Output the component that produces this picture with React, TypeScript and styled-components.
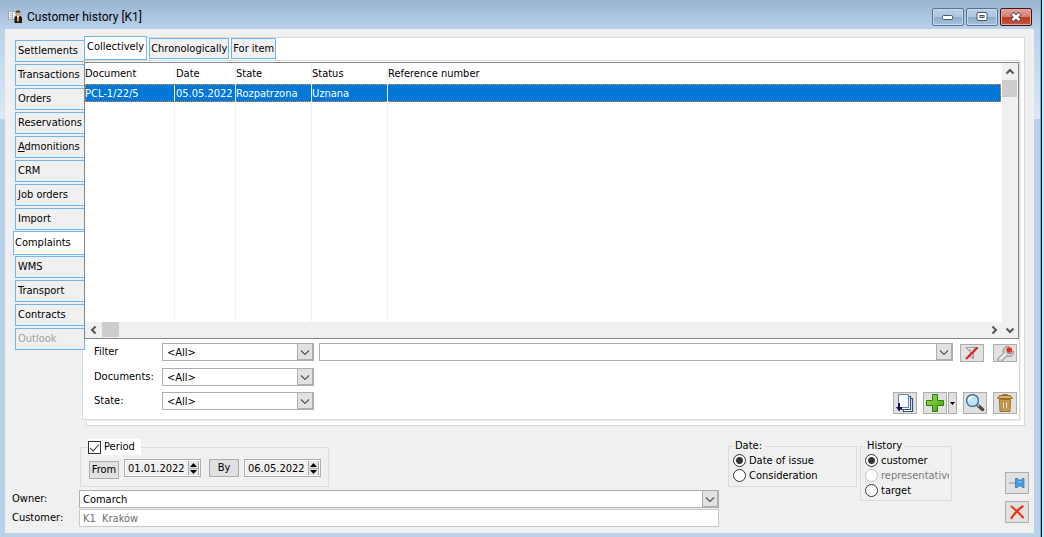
import React, { useState } from 'react';
import styled, { createGlobalStyle, css } from 'styled-components';

const GlobalStyle = createGlobalStyle`
  *, *::before, *::after { box-sizing: border-box; }
  body {
    margin: 0;
    font-family: "DejaVu Sans Condensed", "Noto Sans", sans-serif;
    font-size: 11px;
    line-height: 14px;
    color: #000;
    background: #dedfee;
  }
  button, input, select { font: inherit; color: inherit; margin: 0; border-radius: 0; }
`;

const Window = styled.div`
  display: flex;
  flex-direction: column;
  min-height: 100vh;
  margin-right: 2px;
  padding: 0 7px 4px 5px;
  border-right: 1px solid #000;
  box-shadow: inset -1px 0 0 #35cdf0;
  background:
    linear-gradient(#9ab4d1, #b9d1ea) 0 0 / 100% 29px no-repeat,
    linear-gradient(#b9d1ea, #dce8f5) 0 29px / 100% 90px no-repeat,
    #bad1ea;
`;

const TitleBar = styled.header`
  display: flex;
  align-items: center;
  height: 29px;
  padding: 5px 2px 0 3px;
  gap: 5px;
`;

const Title = styled.h1`
  flex: 1;
  margin: 0;
  font: 12px/18px Roboto, "Open Sans", sans-serif;
`;

const Caption = styled.div`
  display: flex;
  gap: 2px;
`;

const CaptionButton = styled.button<{ $close?: boolean }>`
  display: grid;
  place-items: center;
  width: 32px;
  height: 18px;
  padding: 0;
  border: 1px solid ${p => (p.$close ? '#43141c' : '#56708f')};
  border-radius: 2px;
  box-shadow: inset 0 0 0 1px ${p => (p.$close ? '#e3a59c' : '#c8dbee')};
  background: ${p =>
    p.$close
      ? 'linear-gradient(#e3a196, #d37f73 48%, #b93c27 52%, #c9553c)'
      : 'linear-gradient(#bdd1e7, #adc5df 48%, #8eacca 52%, #a6c1dd)'};
`;

const Content = styled.main`
  flex: 1;
  display: flex;
  flex-direction: column;
  background: #f0f0f0;
`;

const Upper = styled.div`
  flex: 1;
  display: grid;
  grid-template-columns: 81px 1fr;
  padding: 8px 9px 0 0;
`;

const SideTabs = styled.nav`
  position: relative;
  z-index: 1;
  display: flex;
  flex-direction: column;
  align-items: flex-end;
  gap: 2px;
  padding: 3px 1px 0 0;
`;

const tabBase = css`
  padding: 0 2px;
  border: 1px solid #6cb8f5;
  background: #f0f0f0;
  text-align: left;
  white-space: nowrap;
`;

const SideTab = styled.button<{ $active?: boolean }>`
  ${tabBase}
  width: 70px;
  height: 22px;
  &:disabled { color: #a0a0a0; }
  ${p => p.$active && css`
    width: 72px;
    height: 24px;
    margin: -1px 0;
    padding-left: 1px;
    background: #fff;
  `}
`;

const BackPanel = styled.section`
  display: flex;
  flex-direction: column;
  min-width: 0;
  padding: 0 4px 5px 0;
  border: 1px solid #d9d9d9;
  background: #fff;
`;

const TopTabs = styled.div`
  display: flex;
  align-items: flex-end;
  gap: 2px;
  height: 24px;
  margin: -2px 0 0 -3px;
`;

const TopTab = styled.button<{ $active?: boolean }>`
  ${tabBase}
  height: 21px;
  margin-bottom: 1px;
  padding: 1px 1px 0;
  ${p => p.$active && css`
    height: 24px;
    margin: 0;
    padding: 0 2px 2px;
    background: #fff;
  `}
`;

const FrontPanel = styled.div`
  flex: 1;
  display: flex;
  flex-direction: column;
  margin-left: -5px;
  padding: 1px 0 0 1px;
  border: 1px solid #d9d9d9;
  box-shadow: 1px 1px 0 #f0f0f0;
  background: #fff;
`;

const Grid = styled.div`
  position: relative;
  z-index: 2;
  flex: 1;
  display: grid;
  grid-template: 1fr 16px / 1fr 16px;
  border: 1px solid #828790;
  background: #fff;
`;

const TableArea = styled.div`
  display: grid;
  padding-right: 1px;
`;

const Table = styled.table`
  width: 100%;
  height: 100%;
  border-collapse: separate;
  border-spacing: 0;
  table-layout: fixed;
  th, td {
    padding: 0;
    border-right: 1px solid #f0f0f0;
    font-weight: normal;
    text-align: left;
    white-space: nowrap;
  }
  th:last-child, td:last-child { border-right: 0; }
  th { height: 21px; }
  td { padding-top: 1px; }
  th:nth-child(2), td:nth-child(2) { padding-left: 1px; }
`;

const SelectedRow = styled.tr`
  height: 18px;
  background: #0078d7;
  color: #fff;
  outline: 1px dotted #f08a2c;
  outline-offset: -1px;
`;

const ScrollBar = styled.div<{ $vertical?: boolean }>`
  display: flex;
  flex-direction: ${p => (p.$vertical ? 'column' : 'row')};
  justify-content: space-between;
  background: #f0f0f0;
`;

const ScrollStart = styled.div<{ $vertical?: boolean }>`
  display: flex;
  flex-direction: ${p => (p.$vertical ? 'column' : 'row')};
`;

const Thumb = styled.div<{ $vertical?: boolean }>`
  width: ${p => (p.$vertical ? 15 : 17)}px;
  height: ${p => (p.$vertical ? 17 : 15)}px;
  background: #cdcdcd;
`;

const ArrowButton = styled.button`
  display: grid;
  place-items: center;
  width: 17px;
  height: 16px;
  padding: 0;
  border: 0;
  background: transparent;
`;

const NarrowArrow = styled(ArrowButton)`
  width: 16px;
  height: 17px;
`;

const Corner = styled(ArrowButton)`
  width: 16px;
  background: #f0f0f0;
`;

const Filters = styled.form`
  display: flex;
  flex-direction: column;
  gap: 6px;
  padding: 4px 2px 5px 10px;
`;

const FilterRow = styled.div`
  display: flex;
  align-items: flex-start;
`;

const FilterLabel = styled.label`
  width: 68px;
  padding-top: 2px;
`;

const SelectWrap = styled.div<{ $grow?: boolean }>`
  position: relative;
  height: 18px;
  ${p => (p.$grow ? 'flex: 1; min-width: 0;' : 'width: 152px;')}
`;

const Select = styled.select<{ $inset: number }>`
  appearance: none;
  display: block;
  width: 100%;
  height: 18px;
  padding: 1px 18px 0 ${p => p.$inset}px;
  border: 1px solid #adadb3;
  background: #fff;
`;

const Chevron = styled.span`
  position: absolute;
  top: 0;
  right: 0;
  display: grid;
  place-items: center;
  width: 17px;
  height: 18px;
  border: 1px solid #adadb3;
  border-right-width: 2px;
  border-bottom-width: 2px;
  background: #e1e1e1;
  pointer-events: none;
`;

const ExpressionSlot = styled.div`
  flex: 1;
  display: flex;
  min-width: 0;
  padding-left: 5px;
`;

const Actions = styled.div<{ $top?: boolean }>`
  display: flex;
  gap: ${p => (p.$top ? 9 : 6)}px;
  margin: ${p => (p.$top ? '1px 0 0 7px' : '0 0 0 auto')};
`;

const Split = styled.div`
  display: flex;
  gap: 1px;
`;

const IconButton = styled.button<{ $h?: number; $w?: number }>`
  display: grid;
  place-items: center;
  width: ${p => p.$w ?? 24}px;
  height: ${p => p.$h ?? 22}px;
  padding: 0;
  border: 1px solid #adadad;
  background: #e1e1e1;
  overflow: hidden;
`;

const Lower = styled.div`
  display: flex;
  align-items: flex-start;
  padding: 13px 5px 6px 7px;
`;

const Details = styled.div`
  flex: 1;
  min-width: 0;
  display: flex;
  flex-direction: column;
  gap: 1px;
`;

const Group = styled.fieldset`
  min-width: 0;
  margin: 0;
  padding: 0;
  border: 1px solid #dcdcdc;
`;

const PeriodGroup = styled(Group)`
  width: 249px;
  height: 48px;
  margin: 0 0 2px 68px;
`;

const PeriodLegend = styled.legend`
  margin-left: 7px;
  padding: 0 6px 0 0;
  background: #fff;
`;

const CheckLabel = styled.label`
  display: flex;
  align-items: center;
  gap: 3px;
  height: 16px;
`;

const Check = styled.input`
  appearance: none;
  display: grid;
  place-items: center;
  width: 13px;
  height: 13px;
  border: 1px solid #333;
  background: #fff;
  &:checked::after {
    content: "";
    width: 9px;
    height: 5px;
    border: solid #333;
    border-width: 0 0 1px 1px;
    transform: translateY(-1px) rotate(-48deg);
  }
`;

const PeriodFields = styled.div`
  display: flex;
  align-items: flex-start;
  gap: 5px;
  padding: 4px 7px 0 8px;
`;

const TextButton = styled.button<{ $low?: boolean }>`
  width: 30px;
  height: 18px;
  margin: ${p => (p.$low ? '2px 0 0' : '0 0 0 3px')};
  padding: 0;
  border: 1px solid #adadad;
  background: #e1e1e1;
`;

const DateBox = styled.div`
  display: flex;
  width: 77px;
  height: 18px;
  padding: 1px;
  border: 1px solid #adadb3;
  box-shadow: inset 0 0 0 1px #fff;
`;

const DateInput = styled.input`
  flex: 1;
  min-width: 0;
  padding: 1px 0 0 2px;
  border: 0;
  background: transparent;
`;

const Spinner = styled.div`
  display: grid;
  grid-template-rows: 1fr 1fr;
  width: 11px;
  border: solid #adadb3;
  border-width: 0 1px;
`;

const SpinButton = styled.button`
  display: grid;
  place-items: center;
  min-height: 0;
  padding: 0;
  border: 0;
  background: #e6e6e6;
  & + & { border-top: 1px solid #adadb3; }
`;

const FieldRow = styled.div`
  display: flex;
`;

const FieldLabel = styled.label`
  width: 67px;
  padding-top: 2px;
`;

const ReadonlyField = styled.input`
  flex: 1;
  min-width: 0;
  height: 18px;
  padding: 1px 3px 0;
  border: 1px solid #c8c8cc;
  background: #fff;
  &:disabled { color: #6d6d6d; }
`;

const RadioGroup = styled(Group)<{ $w: number; $h: number; $gap: number }>`
  width: ${p => p.$w}px;
  height: ${p => p.$h}px;
  margin-left: ${p => p.$gap}px;
  padding: 0 2px 0 4px;
  > legend { padding: 0 3px 0 2px; }
`;

const RadioLabel = styled.label<{ $off?: boolean }>`
  display: flex;
  align-items: center;
  gap: 3px;
  height: 15px;
  overflow: hidden;
  white-space: nowrap;
  color: ${p => (p.$off ? '#7a7a7a' : 'inherit')};
`;

const Radio = styled.input`
  appearance: none;
  flex: none;
  width: 13px;
  height: 13px;
  border: 1px solid #333;
  border-radius: 50%;
  background: #fff;
  &:checked { background: radial-gradient(circle, #333 0 3px, #fff 4px); }
  &:disabled { border-color: #c4c4c4; }
`;

const WindowActions = styled.div`
  display: flex;
  flex-direction: column;
  gap: 7px;
  margin: 33px 0 0 53px;
`;

const Arrow = ({ d }: { d: 'up' | 'down' | 'left' | 'right' }) => {
  const path = {
    up: 'M1.5 6.5 5 3l3.5 3.5',
    down: 'M1.5 3.5 5 7l3.5-3.5',
    left: 'M6.5 1.5 3 5l3.5 3.5',
    right: 'M3.5 1.5 7 5l-3.5 3.5',
  }[d];
  return (
    <svg width="10" height="10" viewBox="0 0 10 10" fill="none" stroke="#555" strokeWidth="2">
      <path d={path} />
    </svg>
  );
};

const DropArrow = () => (
  <svg width="10" height="8" viewBox="0 0 10 8" fill="none" stroke="#555" strokeWidth="1.2">
    <path d="M1 2.500 5 6.500 9 2.500" />
  </svg>
);

const AppIcon = () => (
  <svg width="14" height="14" viewBox="0 0 14 14">
    <path d="M.5 1.500 4 1l4 1v8l-4-1-3.500.8z" fill="#eef2f5" stroke="#8d9aa6" strokeWidth=".8" />
    <path d="M2 3.500h3M2 5.500h3M2 7.500h3M4.500 1v8" stroke="#a4afb8" strokeWidth=".8" />
    <circle cx="10" cy="3.300" r="2.300" fill="#d9a06c" />
    <path d="M7.600 3a2.400 2.400 0 0 1 4.800 0L11 2.200H9z" fill="#3a2413" />
    <path d="M6.500 13V7.500Q7 5.500 10 5.500t4 2V13z" fill="#15151a" />
    <path d="M8.500 5.600h3L10 10z" fill="#fff" />
    <path d="m10 6 1.300 4-1.300 2.500L8.700 10z" fill="#f39a16" />
  </svg>
);

const FunnelOff = () => (
  <svg width="18" height="16" viewBox="0 0 18 16">
    <path d="M3 2.500h12l-4.500 4.500v6.500l-3-1.500V7z" fill="#bdbdbd" stroke="#9a9a9a" />
    <path d="M5 3.500h5L8.500 6.500v5" stroke="#f2f2f2" fill="none" />
    <path d="M3 14 14.500 2.500" stroke="#dc1f1f" strokeWidth="2.200" />
  </svg>
);

const Wrench = () => (
  <svg width="20" height="17" viewBox="0 0 20 17">
    <path
      d="M3 13.500 8.500 8.200C7 4.500 9.500 1.200 14 1.500L11.500 4.500l1 3.500 3.500.5 2.500-2.500c.5 4-3 6.500-6.500 5l-5 5.200c-2 1.500-5.300-.5-4-2.700z"
      fill="#d0d0d0"
      stroke="#858585"
    />
    <path d="m5 14 6-5.800" stroke="#f7f7f7" strokeWidth="1.200" />
    <circle cx="14.500" cy="5" r="2.700" fill="#e23415" />
  </svg>
);

const Pages = () => (
  <svg width="20" height="20" viewBox="0 0 20 20">
    <path d="M8.500 5.500h9v13h-9z" fill="#fff" stroke="#30557f" strokeWidth="1.200" />
    <path d="M6.500 3.500h9v13h-9z" fill="#fff" stroke="#30557f" strokeWidth="1.200" />
    <path d="M3.500 1.500h10v13h-10z" fill="#f7fbff" stroke="#6384a8" />
    <path d="M4 10v5" stroke="#160b66" strokeWidth="2" />
    <path d="M1 14h6.500L4.200 18.500z" fill="#160b66" />
  </svg>
);

const Plus = () => (
  <svg width="20" height="20" viewBox="0 0 20 20">
    <defs>
      <linearGradient id="plusFill" x2="1" y2="1">
        <stop offset="0" stopColor="#a0e052" />
        <stop offset="1" stopColor="#3c9f10" />
      </linearGradient>
    </defs>
    <path d="M7.500 1.500h5v6h6v5h-6v6h-5v-6h-6v-5h6z" fill="url(#plusFill)" stroke="#2e7d12" />
  </svg>
);

const Magnifier = () => (
  <svg width="20" height="20" viewBox="0 0 20 20">
    <path d="m12 11.500 5.500 5" stroke="#4d4d50" strokeWidth="3.500" strokeLinecap="round" />
    <path d="m11.500 11 2.500 2" stroke="#b8b8b8" strokeWidth="2" />
    <circle cx="7.500" cy="7.500" r="5.900" fill="#bfe2f8" stroke="#356a9c" strokeWidth="1.300" />
    <path d="M4 7.500A3.600 3.600 0 0 1 8.500 4" stroke="#fff" strokeWidth="1.800" fill="none" />
  </svg>
);

const Bin = () => (
  <svg width="18" height="20" viewBox="0 0 18 20">
    <path d="M6.500 2.500v-1h5v1" fill="none" stroke="#9b702e" />
    <path d="M3.500 2.500h11l2 3h-15z" fill="#dcae66" stroke="#9b702e" />
    <path d="M3.500 6.500h11l-.5 12H4z" fill="#cf9a4c" stroke="#9b702e" />
    <path d="M6.500 8.500v7.500h1.800V8.500zm3.300 0v7.500h1.800V8.500z" fill="#f9ecd2" stroke="#9b702e" strokeWidth=".6" />
  </svg>
);

const Pin = () => (
  <svg width="18" height="12" viewBox="0 0 18 12">
    <path d="M1 6h7" stroke="#8f9aa3" />
    <path d="M7.500 1.500h2L10.500 3h3l1-1.500H16v9h-1.500l-1-1.500h-3l-1 1.500h-2z" fill="#4a9ae0" stroke="#2f78be" strokeWidth=".8" />
    <path d="M10 5h3.500" stroke="#a9d5f8" />
  </svg>
);

const Cross = () => (
  <svg width="16" height="16" viewBox="0 0 16 16" fill="none" stroke="#ee3214" strokeLinecap="round">
    <path d="M2.500 2.500Q9 8 14 13.500" strokeWidth="2" />
    <path d="M13.500 2.500Q6 8 2.500 14" strokeWidth="2.200" />
  </svg>
);

const sideTabs = [
  'Settlements', 'Transactions', 'Orders', 'Reservations', 'Admonitions', 'CRM', 'Job orders',
  'Import', 'Complaints', 'WMS', 'Transport', 'Contracts', 'Outlook',
];

const topTabs = ['Collectively', 'Chronologically', 'For item'];

const Dropdown = ({ id, value, inset = 4, grow, label }: {
  id: string; value: string; inset?: number; grow?: boolean; label?: string;
}) => (
  <SelectWrap $grow={grow}>
    <Select id={id} $inset={inset} aria-label={label}>
      <option>{value}</option>
    </Select>
    <Chevron><DropArrow /></Chevron>
  </SelectWrap>
);

const DateField = ({ label, initial }: { label: string; initial: string }) => {
  const [value, setValue] = useState(initial);
  return (
    <DateBox>
      <DateInput aria-label={label} value={value} onChange={e => setValue(e.target.value)} />
      <Spinner>
        <SpinButton type="button" aria-label={`${label} later`}>
          <svg width="7" height="4" viewBox="0 0 7 4"><path d="M0 4 3.500 0 7 4z" /></svg>
        </SpinButton>
        <SpinButton type="button" aria-label={`${label} earlier`}>
          <svg width="7" height="4" viewBox="0 0 7 4"><path d="M0 0 3.500 4 7 0z" /></svg>
        </SpinButton>
      </Spinner>
    </DateBox>
  );
};

export default function App() {
  const [active, setActive] = useState('Complaints');
  const [view, setView] = useState('Collectively');
  return (
    <>
      <GlobalStyle />
      <Window>
        <TitleBar>
          <AppIcon />
          <Title>Customer history [K1]</Title>
          <Caption>
            <CaptionButton aria-label="Minimize">
              <svg width="12" height="6" viewBox="0 0 12 6">
                <rect x=".5" y="1.500" width="10" height="4" rx="1" fill="#fff" stroke="#4a5668" />
              </svg>
            </CaptionButton>
            <CaptionButton aria-label="Maximize">
              <svg width="12" height="10" viewBox="0 0 12 10">
                <rect x="1" y=".5" width="10" height="8" rx="1" fill="#fff" stroke="#4a5668" />
                <rect x="4" y="3.500" width="4" height="2" fill="#a9c1dc" stroke="#4a5668" />
              </svg>
            </CaptionButton>
            <CaptionButton $close aria-label="Close">
              <svg width="12" height="10" viewBox="0 0 12 10">
                <path d="m2 1.500 8 7m0-7-8 7" stroke="#4d4a58" strokeWidth="4.500" />
                <path d="m2.500 2 7 6m0-6-7 6" stroke="#fff" strokeWidth="2.600" />
              </svg>
            </CaptionButton>
          </Caption>
        </TitleBar>
        <Content>
          <Upper>
            <SideTabs>
              {sideTabs.map(name => (
                <SideTab
                  key={name}
                  $active={name === active}
                  disabled={name === 'Outlook'}
                  onClick={() => setActive(name)}
                >
                  {name === 'Admonitions' ? <><u>A</u>dmonitions</> : name}
                </SideTab>
              ))}
            </SideTabs>
            <BackPanel>
              <TopTabs>
                {topTabs.map(name => (
                  <TopTab key={name} $active={name === view} onClick={() => setView(name)}>
                    {name}
                  </TopTab>
                ))}
              </TopTabs>
              <FrontPanel>
                <Grid>
                  <TableArea>
                    <Table>
                      <colgroup>
                        <col width="90" />
                        <col width="61" />
                        <col width="76" />
                        <col width="76" />
                        <col />
                      </colgroup>
                      <thead>
                        <tr>
                          <th>Document</th>
                          <th>Date</th>
                          <th>State</th>
                          <th>Status</th>
                          <th>Reference number</th>
                        </tr>
                      </thead>
                      <tbody>
                        <SelectedRow>
                          <td>PCL-1/22/5</td>
                          <td>05.05.2022</td>
                          <td>Rozpatrzona</td>
                          <td>Uznana</td>
                          <td />
                        </SelectedRow>
                        <tr><td /><td /><td /><td /><td /></tr>
                      </tbody>
                    </Table>
                  </TableArea>
                  <ScrollBar $vertical>
                    <ScrollStart $vertical>
                      <NarrowArrow aria-label="Scroll up"><Arrow d="up" /></NarrowArrow>
                      <Thumb $vertical />
                    </ScrollStart>
                  </ScrollBar>
                  <ScrollBar>
                    <ScrollStart>
                      <ArrowButton aria-label="Scroll left"><Arrow d="left" /></ArrowButton>
                      <Thumb />
                    </ScrollStart>
                    <ArrowButton aria-label="Scroll right"><Arrow d="right" /></ArrowButton>
                  </ScrollBar>
                  <Corner aria-label="Scroll down"><Arrow d="down" /></Corner>
                </Grid>
                <Filters onSubmit={e => e.preventDefault()}>
                  <FilterRow>
                    <FilterLabel htmlFor="filter">Filter</FilterLabel>
                    <Dropdown id="filter" value="<All>" />
                    <ExpressionSlot>
                      <Dropdown id="expression" value="" label="Filter expression" grow />
                    </ExpressionSlot>
                    <Actions $top>
                      <IconButton type="button" $h={18} aria-label="Clear filter"><FunnelOff /></IconButton>
                      <IconButton type="button" $h={18} aria-label="Filter settings"><Wrench /></IconButton>
                    </Actions>
                  </FilterRow>
                  <FilterRow>
                    <FilterLabel htmlFor="documents">Documents:</FilterLabel>
                    <Dropdown id="documents" value="<All>" />
                  </FilterRow>
                  <FilterRow>
                    <FilterLabel htmlFor="state">State:</FilterLabel>
                    <Dropdown id="state" value="<All>" />
                    <Actions>
                      <IconButton type="button" aria-label="Generate"><Pages /></IconButton>
                      <Split>
                        <IconButton type="button" aria-label="Add"><Plus /></IconButton>
                        <IconButton type="button" $w={9} aria-label="Add options">
                          <svg width="5" height="3" viewBox="0 0 5 3"><path d="M0 0h5L2.500 3z" /></svg>
                        </IconButton>
                      </Split>
                      <IconButton type="button" aria-label="Preview"><Magnifier /></IconButton>
                      <IconButton type="button" aria-label="Delete"><Bin /></IconButton>
                    </Actions>
                  </FilterRow>
                </Filters>
              </FrontPanel>
            </BackPanel>
          </Upper>
          <Lower>
            <Details>
              <PeriodGroup>
                <PeriodLegend>
                  <CheckLabel>
                    <Check type="checkbox" defaultChecked />
                    Period
                  </CheckLabel>
                </PeriodLegend>
                <PeriodFields>
                  <TextButton $low>From</TextButton>
                  <DateField label="From date" initial="01.01.2022" />
                  <TextButton>By</TextButton>
                  <DateField label="To date" initial="06.05.2022" />
                </PeriodFields>
              </PeriodGroup>
              <FieldRow>
                <FieldLabel htmlFor="owner">Owner:</FieldLabel>
                <Dropdown id="owner" value="Comarch" inset={3} grow />
              </FieldRow>
              <FieldRow>
                <FieldLabel htmlFor="customer">Customer:</FieldLabel>
                <ReadonlyField id="customer" defaultValue="K1  Kraków" disabled />
              </FieldRow>
            </Details>
            <RadioGroup $w={129} $h={48} $gap={9}>
              <legend>Date:</legend>
              <RadioLabel><Radio type="radio" name="date" defaultChecked />Date of issue</RadioLabel>
              <RadioLabel><Radio type="radio" name="date" />Consideration</RadioLabel>
            </RadioGroup>
            <RadioGroup $w={92} $h={62} $gap={3}>
              <legend>History</legend>
              <RadioLabel><Radio type="radio" name="history" defaultChecked />customer</RadioLabel>
              <RadioLabel $off><Radio type="radio" name="history" disabled />representative</RadioLabel>
              <RadioLabel><Radio type="radio" name="history" />target</RadioLabel>
            </RadioGroup>
            <WindowActions>
              <IconButton aria-label="Pin window"><Pin /></IconButton>
              <IconButton aria-label="Close history"><Cross /></IconButton>
            </WindowActions>
          </Lower>
        </Content>
      </Window>
    </>
  );
}
